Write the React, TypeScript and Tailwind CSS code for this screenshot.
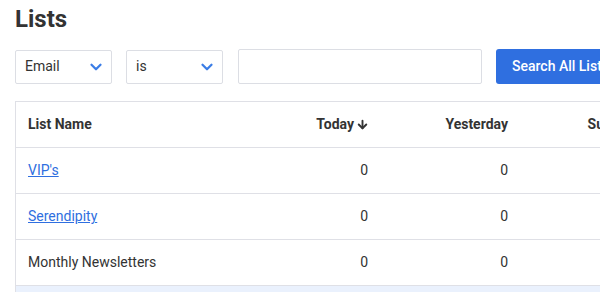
import { ChevronDown, ArrowDown } from 'lucide-react';

interface Row {
  name: string;
  link?: boolean;
  today: number;
  yesterday: number;
}

const rows: Row[] = [
  { name: "VIP's", link: true, today: 0, yesterday: 0 },
  { name: 'Serendipity', link: true, today: 0, yesterday: 0 },
  { name: 'Monthly Newsletters', today: 0, yesterday: 0 },
];

function Select({ value }: { value: string }) {
  return (
    <div className="flex h-[34px] w-[97px] shrink-0 items-center justify-between rounded-[2px] border border-[#dcdee4] bg-white pl-[9px] pr-[6px] text-[14px] text-[#333]">
      <span>{value}</span>
      <ChevronDown size={18} strokeWidth={3} className="text-[#3b7de6]" />
    </div>
  );
}

export default function App() {
  return (
    <div className="h-[292px] w-[600px] overflow-hidden bg-white font-['Roboto',sans-serif] text-[#333]">
      <div className="pl-[15px] pt-[3px]">
        <h1 className="text-[24px] font-bold leading-[32px] text-[#333]">Lists</h1>

        <div className="mt-[14px] flex w-[800px] items-center">
          <Select value="Email" />
          <div className="ml-[14px] shrink-0">
            <Select value="is" />
          </div>
          <div className="ml-[15px] h-[35px] w-[244px] shrink-0 rounded-[2px] border border-[#dcdee4] bg-white" />
          <button className="ml-[14px] h-[35px] shrink-0 whitespace-nowrap rounded-[3px] bg-[#2f6fe0] px-[16px] text-[14px] font-medium text-white">
            Search All Lists
          </button>
        </div>

        <div className="mt-[17px] w-[800px] border-l border-t border-[#dfe0e6]">
          <div className="flex h-[46px] items-center border-b border-[#dfe0e6] text-[14px] font-bold text-[#333]">
            <div className="w-[227px] shrink-0 pl-[12px]">List Name</div>
            <div className="flex w-[140px] shrink-0 items-center justify-end pr-[14px]">
              Today
              <ArrowDown size={13} strokeWidth={3.5} className="ml-[2px]" />
            </div>
            <div className="w-[140px] shrink-0 pr-[15px] text-right">Yesterday</div>
            <div className="w-[155px] shrink-0 pr-[15px] text-right">Subscribers</div>
          </div>
          {rows.map((r) => (
            <div key={r.name} className="flex h-[46px] items-center border-b border-[#dfe0e6] text-[14px] text-[#333]">
              <div className="w-[227px] shrink-0 pl-[12px]">
                {r.link ? (
                  <a href="#" className="text-[#2f6fe0] underline">
                    {r.name}
                  </a>
                ) : (
                  r.name
                )}
              </div>
              <div className="w-[140px] shrink-0 pr-[15px] text-right">{r.today}</div>
              <div className="w-[140px] shrink-0 pr-[15px] text-right">{r.yesterday}</div>
              <div className="w-[155px] shrink-0 pr-[15px] text-right">0</div>
            </div>
          ))}
          <div className="h-[46px] bg-[#eaf1fd]" />
        </div>
      </div>
    </div>
  );
}
